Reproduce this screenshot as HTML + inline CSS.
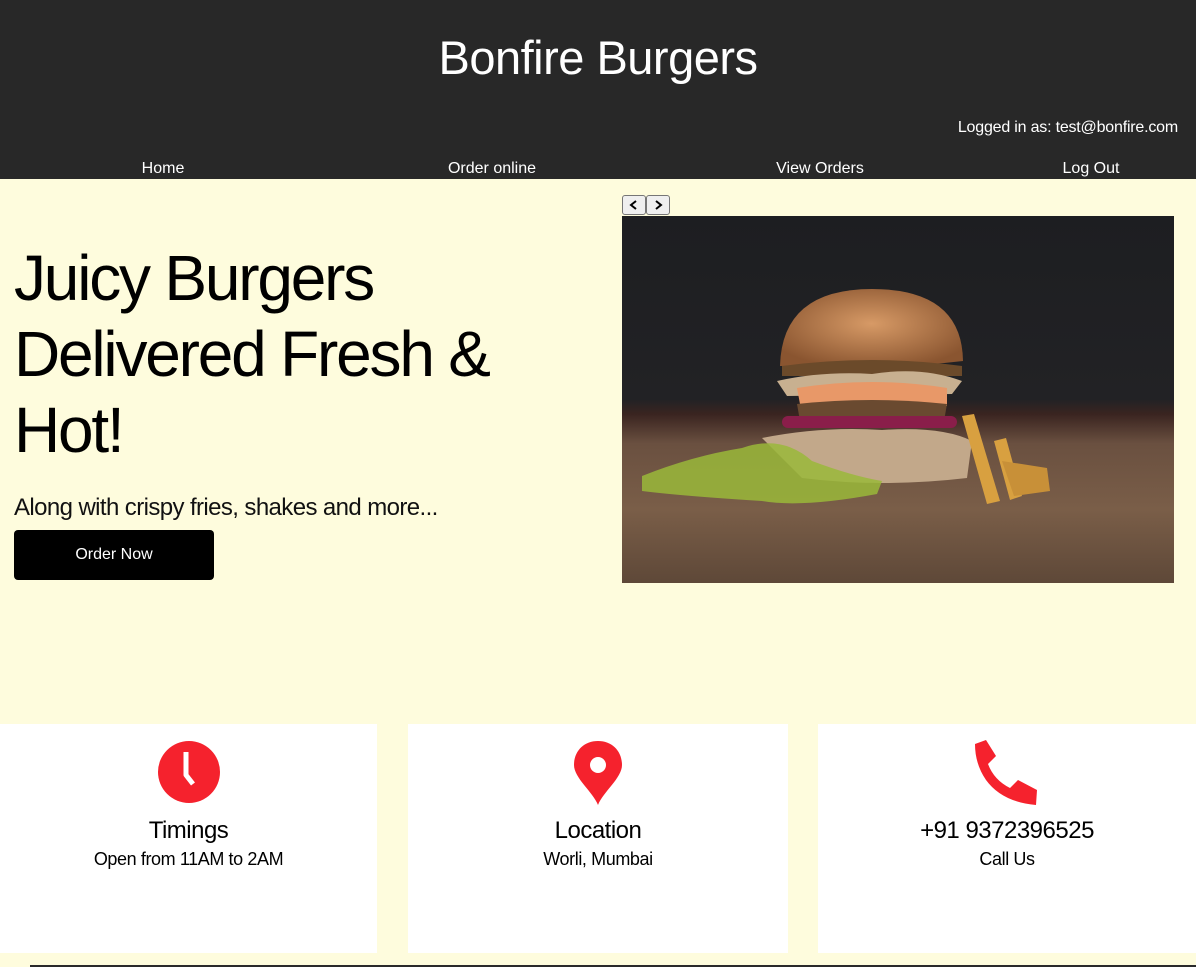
<!DOCTYPE html>
<html><head><meta charset="utf-8"><style>
*{box-sizing:border-box;margin:0;padding:0}
body{width:1196px;height:967px;overflow:hidden;background:#fefcdd;font-family:"Liberation Sans",sans-serif;position:relative}
header{position:absolute;left:0;top:0;width:1196px;height:179px;background:#282828;color:#fff}
h1{position:absolute;top:30px;width:100%;text-align:center;font-weight:400;font-size:47px;letter-spacing:-0.5px}
.login{position:absolute;right:18px;top:119px;font-size:16px;letter-spacing:-0.2px}
.nav a{position:absolute;top:160px;font-size:16px;color:#fff;text-decoration:none;transform:translateX(-50%)}
.hero h2{position:absolute;left:14px;top:240px;font-weight:300;font-size:64px;line-height:76px;color:#000;letter-spacing:-2.2px}
.tag{position:absolute;left:14px;top:494px;font-size:24px;font-weight:300;color:#111;letter-spacing:-0.6px}
.btn{position:absolute;left:14px;top:530px;width:200px;height:50px;background:#000;color:#fff;border-radius:4px;font-size:16px;text-align:center;line-height:50px}
.arr{position:absolute;top:195px;width:24px;height:20px;background:#efefef;border:1px solid #767676;border-radius:3px}
.img{position:absolute;left:622px;top:216px;width:552px;height:367px;overflow:hidden;background:linear-gradient(180deg,#1d1e21 0%,#222225 50%,#3a2420 54%,#6a5040 62%,#7a5e48 80%,#5e4838 100%)}
.card{position:absolute;top:724px;height:229px;background:#fff;text-align:center}
.card .t{position:absolute;top:93px;width:100%;font-size:24px;font-weight:300;color:#000;letter-spacing:-0.5px}
.card .s{position:absolute;top:125px;width:100%;font-size:18px;color:#000;letter-spacing:-0.4px}
.card svg{position:absolute;left:50%;transform:translateX(-50%);top:16px}
</style></head><body>
<header>
<h1>Bonfire Burgers</h1>
<div class="login">Logged in as: test@bonfire.com</div>
<div class="nav"><a style="left:163px">Home</a><a style="left:492px">Order online</a><a style="left:820px">View Orders</a><a style="left:1091px">Log Out</a></div>
</header>
<div class="hero">
<h2>Juicy Burgers<br>Delivered Fresh &amp;<br>Hot!</h2>
<div class="tag">Along with crispy fries, shakes and more...</div>
<div class="btn">Order Now</div>
</div>
<div class="arr" style="left:622px"><svg width="22" height="18"><path d="M13 5 L8 9 L13 13" stroke="#000" stroke-width="2" fill="none"/></svg></div>
<div class="arr" style="left:646px"><svg width="22" height="18"><path d="M9 5 L14 9 L9 13" stroke="#000" stroke-width="2" fill="none"/></svg></div>
<div class="img">
<svg width="552" height="367">
<defs><radialGradient id="bun" cx="50%" cy="45%" r="60%"><stop offset="0" stop-color="#d79a66"/><stop offset="1" stop-color="#8a5530"/></radialGradient></defs>
<path d="M158 150 Q160 73 250 73 Q340 73 341 145 Q300 150 250 150Z" fill="url(#bun)"/>
<path d="M160 150 Q250 138 340 150 L340 160 L160 160Z" fill="#6b4a2a"/>
<path d="M155 165 Q200 155 250 158 Q300 150 340 165 L330 178 L165 180Z" fill="#c8b090"/>
<path d="M175 172 Q250 160 325 172 L325 190 Q250 198 178 188Z" fill="#e89868"/>
<path d="M175 188 Q250 180 325 188 L322 205 Q250 212 178 205Z" fill="#6a4a30"/>
<rect x="160" y="200" width="175" height="12" rx="6" fill="#8a1e4a"/>
<path d="M140 222 Q200 210 260 214 Q320 210 350 225 L345 262 Q260 272 180 262Z" fill="#c2a88a"/>
<path d="M20 260 Q70 240 120 232 Q160 218 190 245 Q230 260 260 265 L255 278 Q180 292 140 285 Q60 280 20 275Z" fill="#9ab83a" opacity=".85"/>
<path d="M340 200 L352 198 L378 285 L365 288Z M372 225 L384 222 L400 280 L388 284Z" fill="#d8a040"/>
<path d="M380 245 L425 252 L428 275 L392 280Z" fill="#c89038"/>
</svg></div>
<div class="card" style="left:0;width:377px">
<svg width="64" height="64" viewBox="0 0 64 64"><circle cx="32" cy="32" r="31" fill="#f5222d"/><path d="M29 12 V35 L36 44" stroke="#fff" stroke-width="5" fill="none" stroke-linejoin="round"/></svg>
<div class="t">Timings</div><div class="s">Open from 11AM to 2AM</div></div>
<div class="card" style="left:408px;width:380px">
<svg width="50" height="66" viewBox="0 0 50 66"><path d="M25 1 C11 1 1 11 1 25 C1 38 20 52 25 65 C30 52 49 38 49 25 C49 11 39 1 25 1Z" fill="#f5222d"/><circle cx="25" cy="25" r="8" fill="#fff"/></svg>
<div class="t">Location</div><div class="s">Worli, Mumbai</div></div>
<div class="card" style="left:818px;width:378px">
<svg width="66" height="66" viewBox="0 0 66 66"><path d="M1 4 L12 0 L22 16 L14 24 Q20 40 36 48 L44 40 L63 50 L62 65 Q28 62 12 40 Q1 24 1 4Z" fill="#f5222d"/></svg>
<div class="t">+91 9372396525</div><div class="s">Call Us</div></div>
<div style="position:absolute;left:30px;top:965px;width:1166px;height:2px;background:#2a2a2a"></div>
</body></html>
